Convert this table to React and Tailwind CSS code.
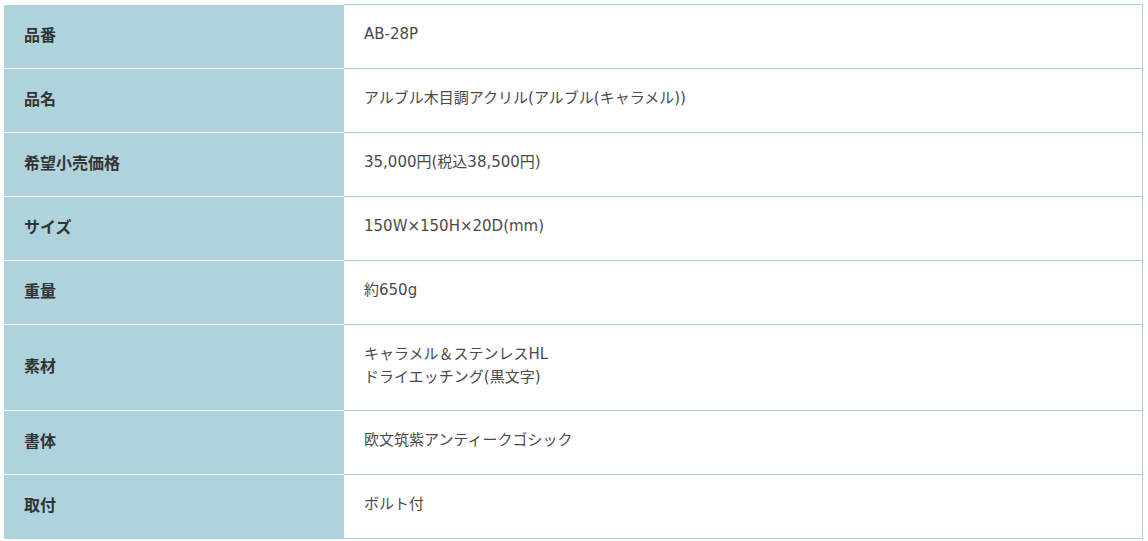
const rows = [
  { label: "品番", value: ["AB-28P"] },
  { label: "品名", value: ["アルブル木目調アクリル(アルブル(キャラメル))"] },
  { label: "希望小売価格", value: ["35,000円(税込38,500円)"] },
  { label: "サイズ", value: ["150W×150H×20D(mm)"] },
  { label: "重量", value: ["約650g"] },
  { label: "素材", value: ["キャラメル＆ステンレスHL", "ドライエッチング(黒文字)"] },
  { label: "書体", value: ["欧文筑紫アンティークゴシック"] },
  { label: "取付", value: ["ボルト付"] },
];

export default function App() {
  return (
    <div
      className="bg-white min-h-screen pt-[4px] pl-[4px]"
      style={{ fontFamily: '"Noto Sans CJK JP", "Noto Sans", sans-serif' }}
    >
      <div className="w-[1139px] flex flex-col">
        {rows.map((row, i) => (
          <div key={row.label} className="flex">
            {/* Left: label */}
            <div className="w-[340px] shrink-0 bg-[#afd3dc] border-t border-white px-5 pt-[18px] pb-[22px] flex items-center">
              <span className="text-[16px] leading-[23px] font-bold text-[#333]">
                {row.label}
              </span>
            </div>

            {/* Right: value */}
            <div
              className={
                "flex-1 border-t border-r border-[#a8d2db] px-5 pt-[18px] pb-[22px] flex flex-col justify-center text-[15px] leading-[22.5px] text-[#4a4a4a]" +
                (i === rows.length - 1 ? " border-b" : "")
              }
              style={{ fontFamily: '"DejaVu Sans", "Noto Sans CJK JP", sans-serif' }}
            >
              {row.value.map((line) => (
                <div key={line}>{line}</div>
              ))}
            </div>
          </div>
        ))}
      </div>
    </div>
  );
}
